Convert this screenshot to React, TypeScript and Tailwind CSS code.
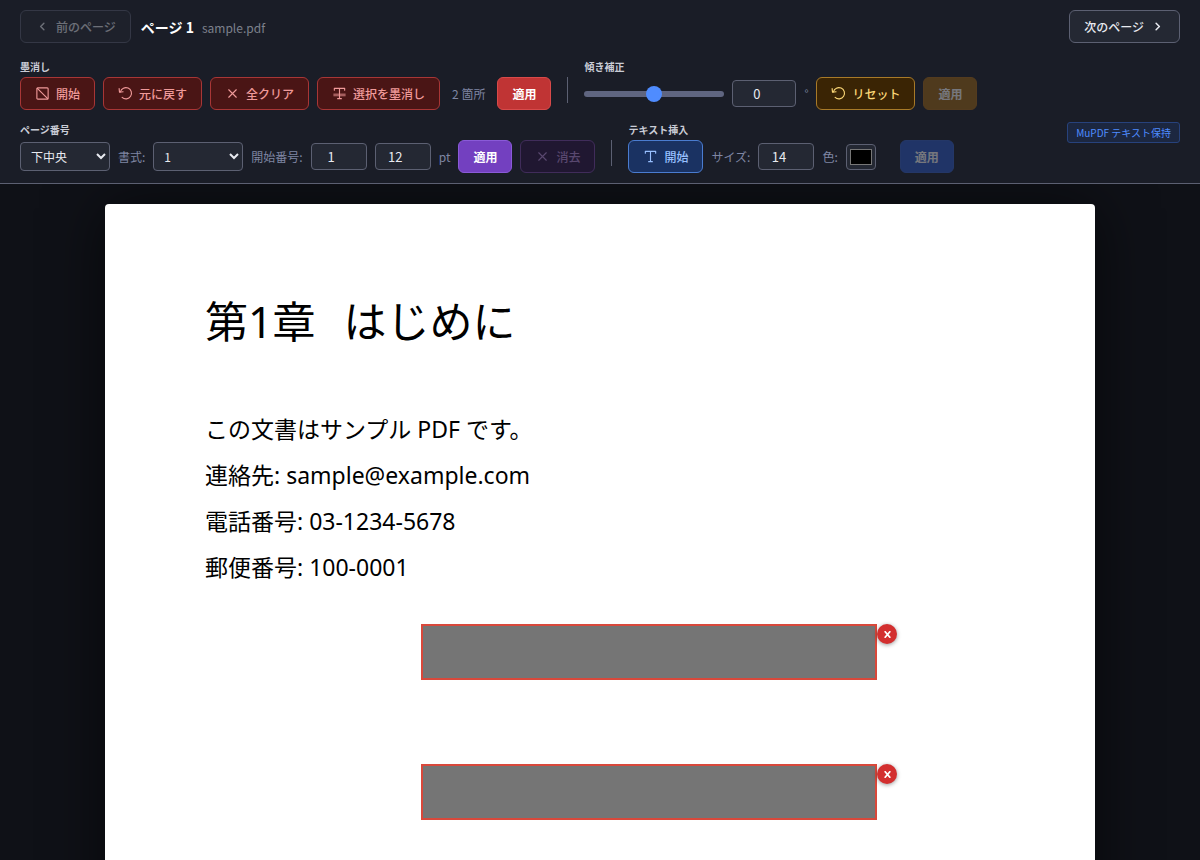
import { useState } from "react";
import type { ButtonHTMLAttributes, InputHTMLAttributes, ReactNode } from "react";

type IconProps = { children: ReactNode };

function Icon({ children }: IconProps) {
  return (
    <svg
      className="size-[15px] shrink-0"
      viewBox="0 0 16 16"
      fill="none"
      stroke="currentColor"
      strokeWidth="1.2"
      strokeLinecap="round"
      strokeLinejoin="round"
      aria-hidden="true"
    >
      {children}
    </svg>
  );
}

const ChevronLeft = () => (
  <Icon>
    <path d="M9.5 4.5 6 8l3.5 3.5" strokeWidth="1.5" />
  </Icon>
);
const ChevronRight = () => (
  <Icon>
    <path d="M6.5 4.5 10 8l-3.5 3.5" strokeWidth="1.6" />
  </Icon>
);
const BoxIcon = () => (
  <Icon>
    <rect x="2" y="2" width="12" height="12" rx="1" />
    <path d="m2.5 2.5 11 11" />
  </Icon>
);
const UndoIcon = () => (
  <Icon>
    <path d="M2.6 6.2A6 6 0 1 1 4.4 12.2" />
    <path d="M1.2 2.8 1.6 6.6 5.4 6.2" />
  </Icon>
);
const CrossIcon = () => (
  <Icon>
    <path d="m4 4 8 8M12 4l-8 8" />
  </Icon>
);
const StrikeTextIcon = () => (
  <Icon>
    <path d="M2.5 4.5v-2h11v2M8 2.5v11M6 13.5h4" />
    <path d="M1.5 9.5h13" strokeWidth="3" strokeLinecap="butt" opacity="0.55" />
  </Icon>
);
const TextIcon = () => (
  <Icon>
    <path d="M2.5 4.5v-2h11v2M8 2.5v11M6 13.5h4" />
  </Icon>
);

const tones = {
  plain: "border-[#5c6072] bg-[#242833] font-medium text-[#e8eaf0]",
  danger: "border-[#a83636] bg-[#4a1515] font-medium text-[#f09a9a]",
  dangerSolid: "border-[#d84a4a] bg-[#c03434] font-bold text-white",
  amber: "border-[#a87a28] bg-[#3a2404] font-medium text-[#fcd878]",
  amberSolid: "border-[#a86a14] bg-[#a0660f] font-bold text-white",
  violet: "border-[#8a5ad8] bg-[#7340c0] font-bold text-white",
  violetDark: "border-[#7a44a8] bg-[#2a1040] font-medium text-[#b888dc]",
  blue: "border-[#4a7cd0] bg-[#1a3262] font-medium text-[#98c0ff]",
  blueSolid: "border-[#3460c8] bg-[#2a58c8] font-bold text-white",
};

type ToolButtonProps = ButtonHTMLAttributes<HTMLButtonElement> & { tone: keyof typeof tones };

function ToolButton({ tone, children, ...rest }: ToolButtonProps) {
  return (
    <button
      type="button"
      className={`flex shrink-0 items-center gap-1.5 rounded-md border px-3.5 py-[7px] text-xs leading-[17px] whitespace-nowrap disabled:opacity-40 ${tones[tone]}`}
      {...rest}
    >
      {children}
    </button>
  );
}

function NumberBox({ wide, ...rest }: InputHTMLAttributes<HTMLInputElement> & { wide?: boolean }) {
  return (
    <input
      type="number"
      className={`h-[27px] shrink-0 rounded border border-[#5c6072] bg-[#242833] px-1.5 text-center text-[13px] text-[#e8eaf0] ${wide ? "w-16" : "w-14"}`}
      {...rest}
    />
  );
}

function Group({ title, children }: { title: string; children: ReactNode }) {
  return (
    <section className="flex flex-col gap-0.5">
      <h2 className="text-[10px] leading-4 font-bold text-[#c9ccd6]">{title}</h2>
      <div className="flex flex-wrap items-center gap-2">{children}</div>
    </section>
  );
}

const Divider = () => <div className="mt-[18px] h-[26px] w-px bg-[#5c6072]" />;

const selectStyle =
  "h-[29px] w-[90px] shrink-0 rounded border border-[#5c6072] bg-[#242833] px-1.5 text-xs text-[#e8eaf0]";
const hint = "text-xs leading-[17px] whitespace-nowrap text-[#7f86a3]";

const lines = [
  "この文書はサンプル PDF です。",
  "連絡先: sample@example.com",
  "電話番号: 03-1234-5678",
  "郵便番号: 100-0001",
];

const marks = [
  { id: 1, place: "top-[420px]" },
  { id: 2, place: "top-[560px]" },
];

export default function App() {
  const [angle, setAngle] = useState("0");
  return (
    <div className="flex h-screen flex-col overflow-hidden bg-[#0f1117] font-['Noto_Sans_CJK_JP',sans-serif] text-[#e8eaf0]">
      <header className="relative z-10 flex shrink-0 flex-col gap-4 border-b border-[#5c6072] bg-[#1a1d27] px-5 py-2.5">
        <div className="flex items-center gap-2.5">
          <ToolButton tone="plain" disabled>
            <ChevronLeft />
            前のページ
          </ToolButton>
          <div className="flex items-baseline gap-2">
            <h1 className="text-sm font-bold text-white">ページ 1</h1>
            <span className="text-xs text-[#7d818c]">sample.pdf</span>
          </div>
          <div className="ml-auto">
            <ToolButton tone="plain">
              次のページ
              <ChevronRight />
            </ToolButton>
          </div>
        </div>

        <div className="flex flex-col gap-3">
          <div className="flex flex-wrap items-start gap-4">
            <Group title="墨消し">
              <ToolButton tone="danger">
                <BoxIcon />
                開始
              </ToolButton>
              <ToolButton tone="danger">
                <UndoIcon />
                元に戻す
              </ToolButton>
              <ToolButton tone="danger">
                <CrossIcon />
                全クリア
              </ToolButton>
              <ToolButton tone="danger">
                <StrikeTextIcon />
                選択を墨消し
              </ToolButton>
              <span className={`px-1 ${hint}`}>2 箇所</span>
              <ToolButton tone="dangerSolid">適用</ToolButton>
            </Group>
            <Divider />
            <Group title="傾き補正">
              <input
                type="range"
                min="-45"
                max="45"
                value={angle}
                onChange={(e) => setAngle(e.target.value)}
                aria-label="傾き補正"
                className="h-4 w-[140px] appearance-none bg-transparent [&::-webkit-slider-runnable-track]:h-1.5 [&::-webkit-slider-runnable-track]:rounded-full [&::-webkit-slider-runnable-track]:bg-[#5f6580] [&::-webkit-slider-thumb]:-mt-[5px] [&::-webkit-slider-thumb]:size-4 [&::-webkit-slider-thumb]:appearance-none [&::-webkit-slider-thumb]:rounded-full [&::-webkit-slider-thumb]:bg-[#4f8cff]"
              />
              <NumberBox wide value={angle} onChange={(e) => setAngle(e.target.value)} aria-label="角度" />
              <span className="w-1 text-[11px] leading-[17px] text-[#7f86a3]">°</span>
              <ToolButton tone="amber" onClick={() => setAngle("0")}>
                <UndoIcon />
                リセット
              </ToolButton>
              <ToolButton tone="amberSolid" disabled>
                適用
              </ToolButton>
            </Group>
          </div>

          <div className="flex flex-wrap items-start gap-4">
            <Group title="ページ番号">
              <select className={selectStyle} aria-label="位置">
                <option>下中央</option>
              </select>
              <label htmlFor="format" className={hint}>
                書式:
              </label>
              <select id="format" className={selectStyle}>
                <option>1</option>
              </select>
              <label htmlFor="start" className={hint}>
                開始番号:
              </label>
              <NumberBox id="start" defaultValue="1" />
              <NumberBox id="points" defaultValue="12" aria-label="文字サイズ" />
              <label htmlFor="points" className={hint}>
                pt
              </label>
              <ToolButton tone="violet">適用</ToolButton>
              <ToolButton tone="violetDark" disabled>
                <CrossIcon />
                消去
              </ToolButton>
            </Group>
            <Divider />
            <Group title="テキスト挿入">
              <ToolButton tone="blue">
                <TextIcon />
                開始
              </ToolButton>
              <label htmlFor="size" className={hint}>
                サイズ:
              </label>
              <NumberBox id="size" defaultValue="14" />
              <label htmlFor="color" className={hint}>
                色:
              </label>
              <input
                id="color"
                type="color"
                defaultValue="#000000"
                className="mr-4 h-[26px] w-[30px] rounded border border-[#5c6072] bg-[#242833] px-px"
              />
              <ToolButton tone="blueSolid" disabled>
                適用
              </ToolButton>
            </Group>
            <span className="ml-auto rounded-[3px] border border-[#27427c] bg-[#1c2740] px-2 py-0.5 text-[10px] leading-[15px] text-[#4f8cff]">
              MuPDF テキスト保持
            </span>
          </div>
        </div>
      </header>

      <main className="flex min-h-0 grow justify-center overflow-hidden px-5 pt-5">
        <article className="relative h-[1400px] w-full max-w-[990px] shrink-0 rounded bg-white px-[100px] pt-[86px] font-['Noto_Sans','Noto_Sans_CJK_JP',sans-serif] text-black shadow-[0_4px_60px_rgba(0,0,0,0.6)]">
          <h2 className="flex gap-7 text-[43px] leading-[64px]">
            <span>第1章</span>
            <span>はじめに</span>
          </h2>
          <div className="mt-[52px] text-[23px] leading-[46px]">
            {lines.map((line) => (
              <p key={line}>{line}</p>
            ))}
          </div>
          {marks.map((mark) => (
            <div key={mark.id} className={`absolute left-[316px] flex items-start ${mark.place}`}>
              <div className="h-14 w-[456px] border-2 border-[#d9483b] bg-[#757575]" />
              <button
                type="button"
                aria-label="墨消しを削除"
                className="flex size-5 items-center justify-center rounded-full bg-[#d32f2f] text-white shadow-[0_1px_4px_rgba(0,0,0,0.4)]"
              >
                <svg className="h-[7px] w-[7px]" viewBox="0 0 7 7" stroke="currentColor" strokeWidth="1.7" aria-hidden="true">
                  <path d="m.7.2 5.6 6.6M6.3.2.7 6.8" />
                </svg>
              </button>
            </div>
          ))}
        </article>
      </main>
    </div>
  );
}
